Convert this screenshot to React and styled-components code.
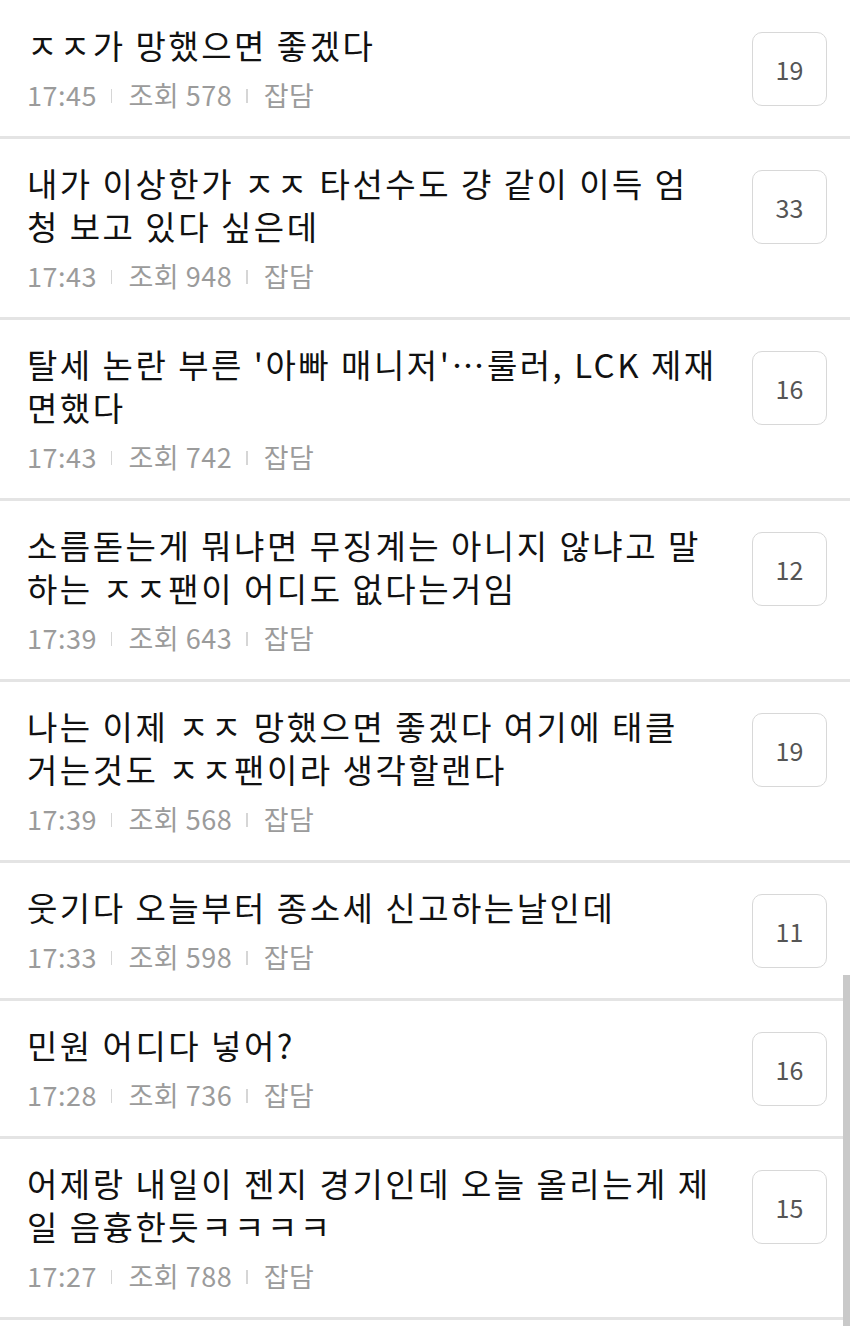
import React from "react";
import styled, { createGlobalStyle } from "styled-components";

// 제목은 원본 화면의 줄바꿈 위치 그대로 나눠 둠
const posts = [
  { title: ["ㅈㅈ가 망했으면 좋겠다"], time: "17:45", views: 578, cat: "잡담", comments: 19 },
  { title: ["내가 이상한가 ㅈㅈ 타선수도 걍 같이 이득 엄", "청 보고 있다 싶은데"], time: "17:43", views: 948, cat: "잡담", comments: 33 },
  { title: ["탈세 논란 부른 '아빠 매니저'…룰러, LCK 제재", "면했다"], time: "17:43", views: 742, cat: "잡담", comments: 16 },
  { title: ["소름돋는게 뭐냐면 무징계는 아니지 않냐고 말", "하는 ㅈㅈ팬이 어디도 없다는거임"], time: "17:39", views: 643, cat: "잡담", comments: 12 },
  { title: ["나는 이제 ㅈㅈ 망했으면 좋겠다 여기에 태클", "거는것도 ㅈㅈ팬이라 생각할랜다"], time: "17:39", views: 568, cat: "잡담", comments: 19 },
  { title: ["웃기다 오늘부터 종소세 신고하는날인데"], time: "17:33", views: 598, cat: "잡담", comments: 11 },
  { title: ["민원 어디다 넣어?"], time: "17:28", views: 736, cat: "잡담", comments: 16 },
  { title: ["어제랑 내일이 젠지 경기인데 오늘 올리는게 제", "일 음흉한듯ㅋㅋㅋㅋ"], time: "17:27", views: 788, cat: "잡담", comments: 15 },
];

export default function App() {
  return (
    <>
      <GlobalStyle />
      <Page>
        <List>
          {posts.map((p, i) => (
            <Row key={i}>
              <Content>
                <Title>
                  {p.title.map((line, j) => (
                    <TitleLine key={j}>{line}</TitleLine>
                  ))}
                </Title>
                <Meta>
                  <span>{p.time}</span>
                  <Divider />
                  <span>조회 {p.views}</span>
                  <Divider />
                  <span>{p.cat}</span>
                </Meta>
              </Content>
              <CommentBox>{p.comments}</CommentBox>
            </Row>
          ))}
        </List>
        <ScrollThumb />
      </Page>
    </>
  );
}

const GlobalStyle = createGlobalStyle`
  html, body {
    margin: 0;
    padding: 0;
    background: #ffffff;
  }
  body {
    font-family: "Noto Sans CJK KR", "Noto Sans", sans-serif;
  }
`;

const Page = styled.div`
  position: relative;
  width: 850px;
  height: 1326px;
  overflow: hidden;
  background: #ffffff;
`;

const List = styled.ul`
  list-style: none;
  margin: 1px 0 0;
  padding: 0;
`;

const Row = styled.li`
  display: flex;
  align-items: flex-start;
  gap: 30px;
  padding: 23px 23px 24px 27px;
  border-bottom: 3px solid #e4e4e4;
`;

const Content = styled.div`
  flex: 1;
  min-width: 0;
`;

const Title = styled.div`
  font-size: 33px;
  line-height: 43px;
  letter-spacing: 2.5px;
  color: #111111;
`;

const TitleLine = styled.span`
  display: block;
  white-space: nowrap;
`;

const Meta = styled.div`
  display: flex;
  align-items: center;
  margin-top: 11px;
  font-size: 27px;
  line-height: 34px;
  letter-spacing: 0.5px;
  color: #9b9b9b;
`;

const Divider = styled.i`
  display: block;
  width: 1.5px;
  height: 14px;
  margin: 2px 16px 0 14px;
  background: #d6d6d6;
`;

const CommentBox = styled.div`
  flex: none;
  display: flex;
  align-items: center;
  justify-content: center;
  box-sizing: border-box;
  width: 75px;
  height: 74px;
  margin-top: 8px;
  border: 1.5px solid #d8d8d8;
  border-radius: 10px;
  font-size: 25px;
  color: #555555;
`;

const ScrollThumb = styled.div`
  position: absolute;
  right: 0;
  top: 975px;
  width: 7px;
  bottom: 0;
  background: #c9c9c9;
`;
